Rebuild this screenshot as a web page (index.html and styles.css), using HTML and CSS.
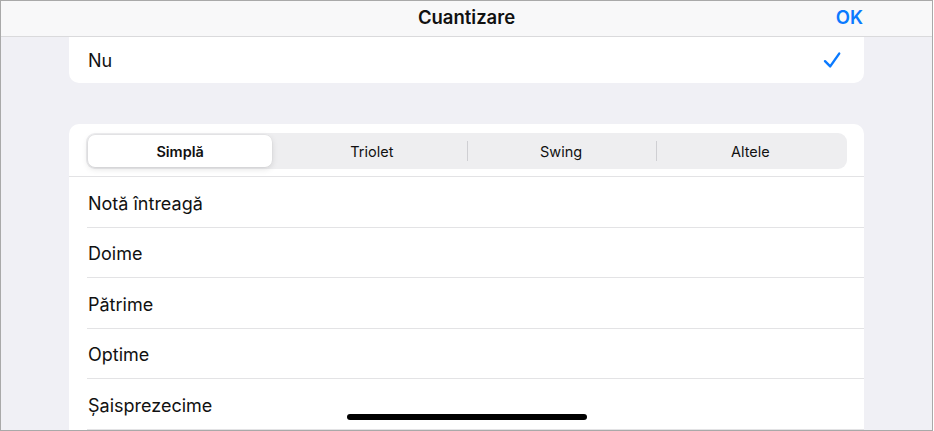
FILE: index.html
```html
<!DOCTYPE html>
<html lang="ro">
<head>
<meta charset="utf-8">
<title>Cuantizare</title>
<link rel="stylesheet" href="styles.css">
</head>
<body>
<div class="frame">
  <header class="navbar">
    <span class="nav-spacer"></span>
    <h1 class="nav-title">Cuantizare</h1>
    <button class="nav-ok">OK</button>
  </header>
  <main class="content">
    <section class="card card-top">
      <div class="row row-check">
        <span class="row-label">Nu</span>
        <svg class="check" width="18" height="18" viewBox="0 0 18 18" aria-hidden="true">
          <path d="M2 10.2 L7.2 15.4 L16.2 2.6" fill="none" stroke="#0a7aff" stroke-width="2.4" stroke-linecap="round" stroke-linejoin="round"/>
        </svg>
      </div>
    </section>
    <section class="card card-list">
      <div class="seg-wrap">
        <div class="segmented">
          <div class="seg seg-active">Simplă</div>
          <div class="seg">Triolet</div>
          <div class="seg seg-divided">Swing</div>
          <div class="seg seg-divided">Altele</div>
        </div>
      </div>
      <ul class="list">
        <li class="item"><span>Notă întreagă</span></li>
        <li class="item"><span>Doime</span></li>
        <li class="item"><span>Pătrime</span></li>
        <li class="item"><span>Optime</span></li>
        <li class="item"><span>Șaisprezecime</span></li>
      </ul>
    </section>
  </main>
  <div class="home-indicator"></div>
</div>
</body>
</html>
```
FILE: styles.css
```css
* { box-sizing: border-box; }
html, body {
  margin: 0;
  padding: 0;
  background: #ffffff;
}
body {
  font-family: Inter, "Liberation Sans", sans-serif;
  color: #000;
  -webkit-font-smoothing: antialiased;
}
.frame {
  position: relative;
  width: 933px;
  height: 431px;
  border: 1px solid #a9a9a9;
  background: #f0f0f5;
  overflow: hidden;
  display: flex;
  flex-direction: column;
}
.navbar {
  flex: 0 0 36px;
  height: 36px;
  background: #f8f8f9;
  border-bottom: 1px solid #dadadc;
  display: grid;
  grid-template-columns: 1fr auto 1fr;
  align-items: center;
}
.nav-title {
  margin: 0;
  font-size: 18.5px;
  font-weight: 600;
  line-height: 1;
  padding-bottom: 2px;
  color: #111;
}
.nav-ok {
  justify-self: end;
  margin-right: 69px;
  background: none;
  border: 0;
  padding: 0 0 2px;
  font-family: inherit;
  font-size: 18.5px;
  font-weight: 600;
  color: #0a7aff;
  line-height: 1;
}
.content {
  flex: 1;
  padding: 0 68px;
  display: flex;
  flex-direction: column;
  gap: 41px;
}
.card {
  background: #fff;
  border-radius: 10px;
}
.card-top {
  border-radius: 0 0 10px 10px;
  height: 46px;
}
.row-check {
  height: 46px;
  display: flex;
  align-items: center;
  justify-content: space-between;
  padding: 0 23px 0 19px;
}
.row-label {
  font-size: 18px;
  color: #111;
}
.check { display: block; margin-top: -1px; }
.card-list {
  flex: 1;
  border-radius: 10px 10px 0 0;
}
.seg-wrap {
  height: 53px;
  padding: 9px 17px 0;
  border-bottom: 1px solid #e3e3e5;
}
.segmented {
  height: 36px;
  background: #eeeef0;
  border-radius: 9px;
  padding: 2px;
  display: grid;
  grid-template-columns: repeat(4, 1fr);
}
.seg {
  position: relative;
  display: flex;
  align-items: center;
  justify-content: center;
  font-size: 14.5px;
  font-weight: 400;
  color: #111;
}
.seg-divided::before {
  content: "";
  position: absolute;
  left: 0;
  top: 6px;
  bottom: 6px;
  width: 1px;
  background: #cfcfd3;
}
.seg-active {
  background: #fff;
  border-radius: 7px;
  margin-right: 5px;
  font-weight: 600;
  box-shadow: 0 2px 6px rgba(0,0,0,0.12), 0 0 0 0.5px rgba(0,0,0,0.04);
}
.list {
  list-style: none;
  margin: 0;
  padding: 0 0 0 18px;
}
.item {
  height: 50.5px;
  display: flex;
  align-items: center;
  border-bottom: 1px solid #e3e3e5;
  font-size: 18px;
  color: #111;
  padding-left: 1px;
  padding-top: 3px;
}
.home-indicator {
  position: absolute;
  left: 346px;
  top: 413px;
  width: 240px;
  height: 6px;
  border-radius: 3px;
  background: #000;
}
```
